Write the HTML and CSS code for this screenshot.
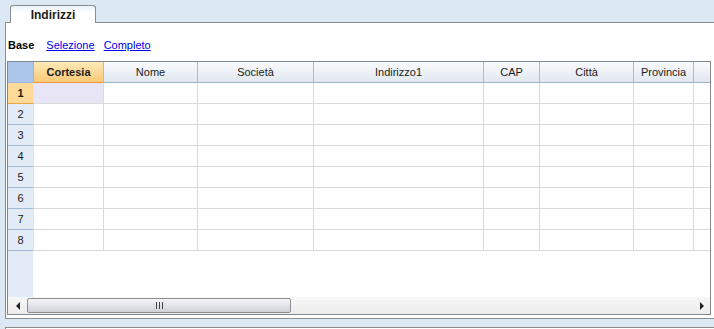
FILE: index.html
```html
<!DOCTYPE html>
<html lang="it">
<head>
    <meta charset="UTF-8">
    <title>Indirizzi</title>
    <link rel="stylesheet" href="styles.css">
</head>
<body>
    <div class="tabs">
        <div class="tab">Indirizzi</div>
    </div>

    <div class="panel">
        <div class="views">
            <span class="view-current">Base</span>
            <a href="#">Selezione</a>
            <a href="#">Completo</a>
        </div>

        <div class="sheet">
            <div class="sheet-body">
                <div class="grid">
                    <!-- intestazione -->
                    <div class="cell corner"></div>
                    <div class="cell head head-sel">Cortesia</div>
                    <div class="cell head">Nome</div>
                    <div class="cell head">Società</div>
                    <div class="cell head">Indirizzo1</div>
                    <div class="cell head">CAP</div>
                    <div class="cell head">Città</div>
                    <div class="cell head">Provincia</div>
                    <div class="cell head"></div>

                    <div class="cell rowhead rowhead-sel">1</div>
                    <div class="cell selected"></div>
                    <div class="cell"></div><div class="cell"></div><div class="cell"></div><div class="cell"></div><div class="cell"></div><div class="cell"></div><div class="cell"></div>

                    <div class="cell rowhead">2</div>
                    <div class="cell"></div><div class="cell"></div><div class="cell"></div><div class="cell"></div><div class="cell"></div><div class="cell"></div><div class="cell"></div><div class="cell"></div>

                    <div class="cell rowhead">3</div>
                    <div class="cell"></div><div class="cell"></div><div class="cell"></div><div class="cell"></div><div class="cell"></div><div class="cell"></div><div class="cell"></div><div class="cell"></div>

                    <div class="cell rowhead">4</div>
                    <div class="cell"></div><div class="cell"></div><div class="cell"></div><div class="cell"></div><div class="cell"></div><div class="cell"></div><div class="cell"></div><div class="cell"></div>

                    <div class="cell rowhead">5</div>
                    <div class="cell"></div><div class="cell"></div><div class="cell"></div><div class="cell"></div><div class="cell"></div><div class="cell"></div><div class="cell"></div><div class="cell"></div>

                    <div class="cell rowhead">6</div>
                    <div class="cell"></div><div class="cell"></div><div class="cell"></div><div class="cell"></div><div class="cell"></div><div class="cell"></div><div class="cell"></div><div class="cell"></div>

                    <div class="cell rowhead">7</div>
                    <div class="cell"></div><div class="cell"></div><div class="cell"></div><div class="cell"></div><div class="cell"></div><div class="cell"></div><div class="cell"></div><div class="cell"></div>

                    <div class="cell rowhead">8</div>
                    <div class="cell"></div><div class="cell"></div><div class="cell"></div><div class="cell"></div><div class="cell"></div><div class="cell"></div><div class="cell"></div><div class="cell"></div>
                </div>
            </div>

            <!-- barra di scorrimento orizzontale -->
            <div class="hscroll">
                <div class="scroll-btn"><span class="arrow-left"></span></div>
                <div class="thumb"><span class="grip"></span></div>
                <div class="track"></div>
                <div class="scroll-btn"><span class="arrow-right"></span></div>
            </div>
        </div>
    </div>

    <div class="next-panel"></div>
</body>
</html>
```

FILE: styles.css
```css
body {
    margin: 0;
    padding: 0;
    font-family: "Liberation Sans", Arial, sans-serif;
    font-size: 11px;
    color: #1b1b1b;
    background-color: #dde8f5;
    overflow: hidden;
}

/* linguette */
.tabs {
    height: 22px;
    display: flex;
    align-items: flex-end;
    padding-left: 10px;
}

.tab {
    position: relative;
    z-index: 1;
    width: 84px;
    height: 17px;
    margin-bottom: -1px;
    border: 1px solid #8d8d8d;
    border-bottom: none;
    border-radius: 3px 3px 0 0;
    background: linear-gradient(#eef3fa, #ffffff 45%);
    font-size: 12px;
    font-weight: bold;
    line-height: 18px;
    text-align: center;
}

.panel {
    margin-left: 5px;
    height: 295px;
    border: 1px solid #8d8d8d;
    border-right: none;
    background-color: #fff;
}

.views {
    margin-top: 15px;
    margin-bottom: 9px;
    height: 14px;
    line-height: 14px;
    padding-left: 2px;
    display: flex;
}

.view-current {
    font-weight: bold;
    color: #000;
}

.views a {
    color: #0000ee;
    text-decoration: underline;
    margin-left: 12px;
}

.views a + a {
    margin-left: 9px;
}

/* foglio */
.sheet {
    margin-left: 1px;
    width: 702px;
    border: 1px solid #84888f;
}

.sheet-body {
    height: 235px;
    background: linear-gradient(to right, #e3ebf6 25px, #ffffff 25px);
}

.grid {
    display: grid;
    grid-template-columns: 26px 70px 94px 116px 170px 56px 94px 60px 16px;
    grid-auto-rows: 21px;
    background-color: #fff;
}

.cell {
    box-sizing: border-box;
    border-right: 1px solid #dadada;
    border-bottom: 1px solid #dadada;
    line-height: 20px;
    text-align: center;
    white-space: nowrap;
    overflow: hidden;
}

.cell:nth-child(9n) {
    border-right: none;
}

.head {
    background: linear-gradient(#fafbfd, #e1e7f0);
    border-right-color: #a9bcd3;
    border-bottom-color: #9db2cc;
}

.head-sel {
    background: linear-gradient(#feeab8, #f9c977);
    border-right-color: #e9b26b;
    border-bottom-color: #f09a34;
    font-weight: bold;
}

.corner {
    background-color: #abc6ea;
    border-right-color: #9cb5d6;
    border-bottom-color: #9cb5d6;
}

.rowhead {
    background-color: #e3ebf6;
    border-right-color: #dbe4f0;
    border-bottom-color: #a2b8d3;
}

.rowhead-sel {
    background-color: #fdda97;
    border-bottom-color: #f2a343;
    font-weight: bold;
}

.selected {
    background-color: #e8e6f6;
}

/* scorrimento */
.hscroll {
    display: flex;
    height: 17px;
    background: linear-gradient(#f7f7f7, #ececec);
}

.scroll-btn {
    width: 19px;
    display: flex;
    align-items: center;
    justify-content: center;
}

.scroll-btn:last-child {
    width: 16px;
}

.arrow-left {
    border-top: 4px solid transparent;
    border-bottom: 4px solid transparent;
    border-right: 4px solid #222;
}

.arrow-right {
    border-top: 4px solid transparent;
    border-bottom: 4px solid transparent;
    border-left: 4px solid #222;
}

.thumb {
    box-sizing: border-box;
    width: 264px;
    margin: 1px 0;
    border: 1px solid #8f8f8f;
    border-radius: 2px;
    background: linear-gradient(#f6f4f8, #e4e3ea 50%, #cfd0d8);
    display: flex;
    align-items: center;
    justify-content: center;
}

.grip {
    width: 7px;
    height: 7px;
    background: repeating-linear-gradient(to right, #444 0, #444 1px, transparent 1px, transparent 3px);
}

.track {
    flex: 1;
}

.next-panel {
    margin-top: 8px;
    margin-left: 5px;
    height: 10px;
    border-top: 1px solid #8d8d8d;
    border-left: 1px solid #8d8d8d;
    background-color: #fff;
}
```
